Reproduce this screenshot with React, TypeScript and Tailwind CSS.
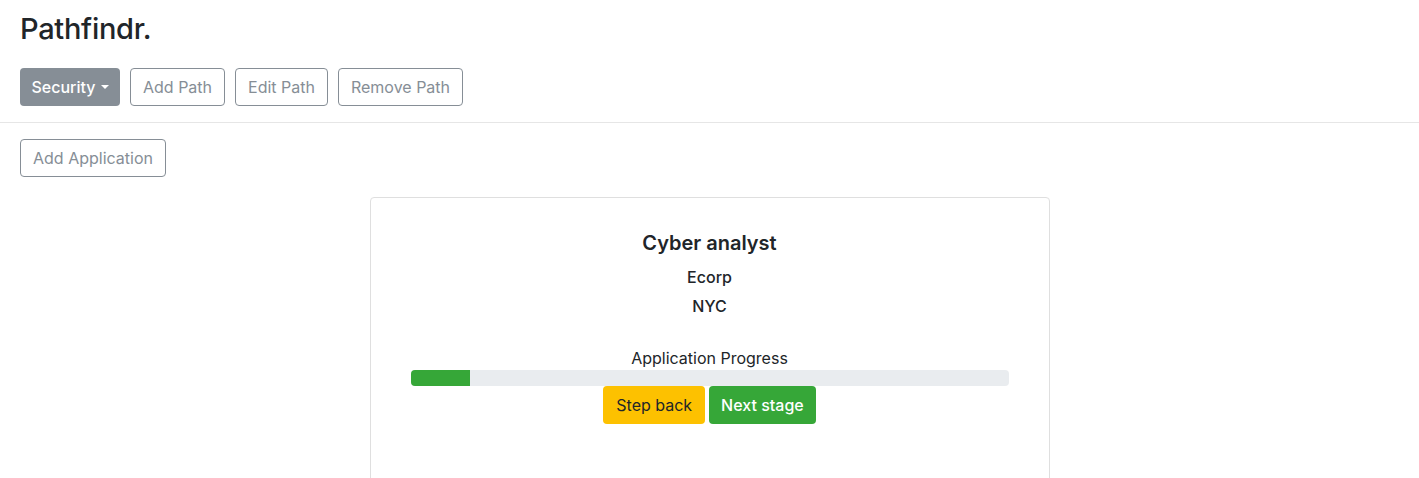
import React from 'react';

const outlineBtn =
  "h-[38px] px-3 rounded-[4px] border border-[#868e96] text-[#868e96] text-base leading-6 bg-white";

const App = () => {
  return (
    <div className="min-h-[478px] bg-white font-['Inter','Liberation_Sans',sans-serif] text-[#212529]">
      {/* Header */}
      <div className="px-5 pt-[12px]">
        <h3 className="text-[29px] leading-[34px] font-medium tracking-[-0.3px]">Pathfindr.</h3>
        <div className="flex gap-[10px] mt-[22px]">
          <button className="h-[38px] w-[100px] justify-center rounded-[4px] bg-[#868e96] text-white text-base leading-6 font-medium flex items-center">
            Security
            <span className="ml-[5px] w-0 h-0 border-x-[4px] border-x-transparent border-t-[4px] border-t-white" />
          </button>
          <button className={outlineBtn}>Add Path</button>
          <button className={outlineBtn}>Edit Path</button>
          <button className={outlineBtn}>Remove Path</button>
        </div>
      </div>

      <hr className="mt-4 border-t border-[#e6e6e6]" />

      <div className="px-5 pt-4">
        <button className={outlineBtn}>Add Application</button>

        <div className="flex justify-center mt-5">
          <div className="w-[680px] h-[300px] border border-[#dfdfdf] rounded-[4px] px-10 pt-[33px] text-center">
            <h5 className="text-[20px] leading-6 font-semibold">Cyber analyst</h5>
            <p className="mt-[10px] text-base leading-6 font-medium">Ecorp</p>
            <p className="mt-[5px] text-base leading-6 font-medium">NYC</p>
            <p className="mt-[28px] text-base leading-6">Application Progress</p>
            <div className="h-4 rounded-[4px] bg-[#e9ecef] overflow-hidden">
              <div className="h-full w-[10%] bg-[#36a738]" />
            </div>
            <div className="flex justify-center gap-[4px]">
              <button className="h-[38px] px-[13px] rounded-[4px] bg-[#fdc100] text-[#212529] text-base leading-6">
                Step back
              </button>
              <button className="h-[38px] px-3 rounded-[4px] bg-[#36a738] text-white text-base leading-6 font-medium">
                Next stage
              </button>
            </div>
          </div>
        </div>
      </div>
    </div>
  );
};

export default App;
